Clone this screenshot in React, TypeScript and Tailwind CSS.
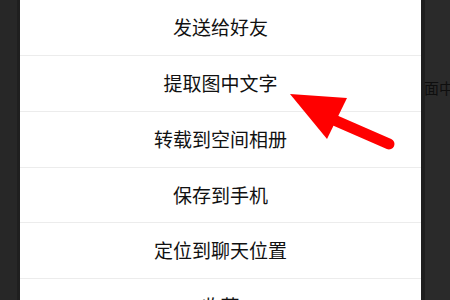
const ITEMS = ["发送给好友", "提取图中文字", "转载到空间相册", "保存到手机", "定位到聊天位置", "收藏"];

const App = () => {
  return (
    <div
      className="relative flex h-[300px] w-[450px] overflow-hidden bg-[#272727]"
      style={{ fontFamily: '"Noto Sans CJK SC", "Noto Sans", sans-serif' }}
    >
      {/* dim backdrop, left */}
      <div className="w-[17px] shrink-0 bg-[#272727]" />
      <div className="w-[3px] shrink-0 bg-[#1f1f1f]" />

      {/* action sheet */}
      <div className="flex w-[401px] shrink-0 flex-col bg-white">
        {ITEMS.map((item, i) => (
          <div
            key={i}
            className={
              i === 0
                ? "flex h-[55px] shrink-0 items-center justify-center text-[19px] text-[#111]"
                : "flex h-[55.75px] shrink-0 items-center justify-center border-t border-[#ececec] text-[19px] text-[#111]"
            }
          >
            {item}
          </div>
        ))}
      </div>

      {/* dim backdrop, right, with chat text underneath */}
      <div className="flex-1 overflow-hidden bg-[linear-gradient(to_right,#1f1f1f_4px,#2a2a2a_4px)] pl-[3px] pt-[75px]">
        <span className="whitespace-nowrap text-[15px] text-[#0e0e0e]">面中文字</span>
      </div>

      {/* red annotation arrow */}
      <svg className="pointer-events-none absolute left-0 top-0" width="450" height="300" viewBox="0 0 450 300">
        <line x1="334" y1="120" x2="389" y2="144" stroke="#ff0000" strokeWidth="11" strokeLinecap="round" />
        <polygon points="290,94 347,98 327,139" fill="#ff0000" />
      </svg>
    </div>
  );
};

export default App;
